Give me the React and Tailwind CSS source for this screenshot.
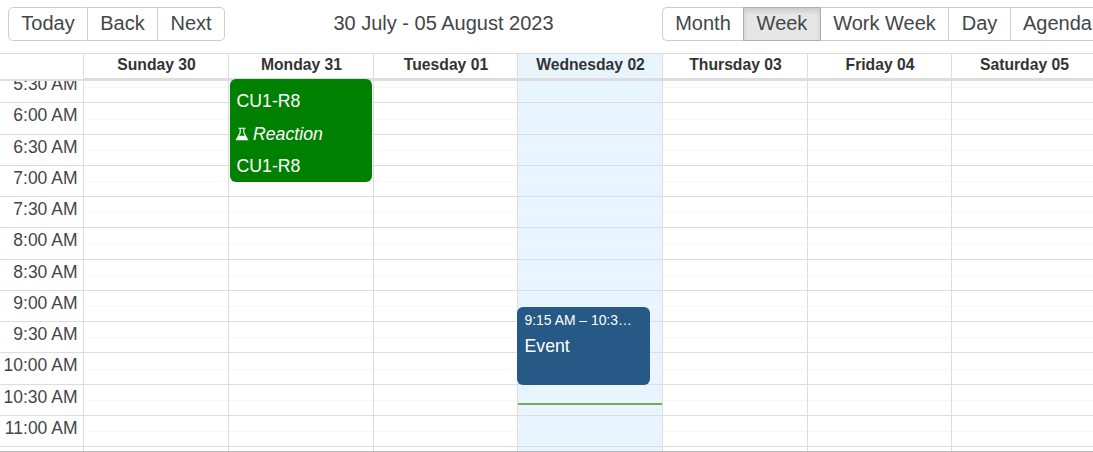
const slots = [
  ['5:30 AM', 'h-[22px]', '-mt-[8px]'],
  ['6:00 AM', 'h-[32px]', 'mt-px'],
  ['6:30 AM', 'h-[31px]', 'mt-px'],
  ['7:00 AM', 'h-[31px]', 'mt-px'],
  ['7:30 AM', 'h-[31px]', 'mt-px'],
  ['8:00 AM', 'h-[32px]', 'mt-px'],
  ['8:30 AM', 'h-[31px]', 'mt-px'],
  ['9:00 AM', 'h-[31px]', 'mt-px'],
  ['9:30 AM', 'h-[31px]', 'mt-px'],
  ['10:00 AM', 'h-[32px]', 'mt-px'],
  ['10:30 AM', 'h-[31px]', 'mt-px'],
  ['11:00 AM', 'h-[31px]', 'mt-px'],
];

const days = [
  ['Sunday 30', 'w-[145px]'],
  ['Monday 31', 'w-[145px]'],
  ['Tuesday 01', 'w-[144px]'],
  ['Wednesday 02', 'w-[145px]'],
  ['Thursday 03', 'w-[145px]'],
  ['Friday 04', 'w-[144px]'],
  ['Saturday 05', 'w-[145px]'],
];

function ToolButton({ label, className, active }) {
  return (
    <button
      className={`h-[34px] shrink-0 border-y border-r pb-[2px] text-center text-[20px] leading-[30px] text-[#434648] ${className} ${
        active ? 'border-[#adadad] bg-[#e6e6e6] shadow-[inset_0_3px_5px_rgba(0,0,0,0.125)]' : 'border-[#ccc] bg-white'
      }`}
    >
      {label}
    </button>
  );
}

function Toolbar() {
  return (
    <div className="flex h-[53px] shrink-0 items-start justify-between pl-2 pt-[7px]">
      <div className="flex">
        <ToolButton label="Today" className="w-[80px] rounded-l-[5px] border-l" />
        <ToolButton label="Back" className="w-[70px]" />
        <ToolButton label="Next" className="w-[67px] rounded-r-[5px]" />
      </div>
      <div className="pt-px text-[20px] leading-[30px] whitespace-nowrap text-[#434648]">
        30 July - 05 August 2023
      </div>
      <div className="flex w-[431px] overflow-hidden">
        <ToolButton label="Month" className="w-[81px] rounded-l-[5px] border-l border-r-0" />
        <ToolButton label="Week" active className="w-[78px] border-l" />
        <ToolButton label="Work Week" className="w-[128px]" />
        <ToolButton label="Day" className="w-[62px]" />
        <ToolButton label="Agenda" className="w-[94px]" />
      </div>
    </div>
  );
}

function Header() {
  return (
    <div className="flex h-[28px] shrink-0 border-t border-b border-[#ddd]">
      <div className="w-[83px] shrink-0 border-b border-[#ddd]" />
      {days.map(([name, width], i) => (
        <div
          key={name}
          className={`shrink-0 border-b-2 border-l border-[#ddd] pl-px text-center text-[15.7px] leading-[22px] font-bold whitespace-nowrap text-[#333] ${width} ${
            i === 3 ? 'bg-[#e8f5fe]' : ''
          }`}
        >
          {name}
        </div>
      ))}
    </div>
  );
}

function Flask() {
  return (
    <svg viewBox="0 0 14 14" className="h-[14px] w-[14px] shrink-0" fill="none" stroke="white">
      <path d="M3.5 1.2h7M5.2 1.2v4.6L1.4 12.6h11.2L8.8 5.8V1.2" strokeWidth="1.1" />
      <path d="M4 8.8h6l2.3 3.8H1.7z" fill="white" stroke="none" />
    </svg>
  );
}

function ReactionEvent() {
  return (
    <div className="absolute -top-[2px] left-px h-[103px] w-[142px] rounded-[6px] bg-[#008000] pt-[6px] pl-[6.5px] text-[17.7px] leading-[32.5px] text-white">
      <div>CU1-R8</div>
      <div className="-ml-[1.5px] flex items-center gap-[4px] italic">
        <Flask />
        <span>Reaction</span>
      </div>
      <div>CU1-R8</div>
    </div>
  );
}

function BlueEvent() {
  return (
    <div className="absolute top-[226px] -left-px h-[78px] w-[133px] rounded-[6px] bg-[#265985] pr-2 pl-[7.5px] pt-[3px] text-white">
      <div className="text-[13.9px] leading-[20px] whitespace-nowrap">9:15 AM – 10:3…</div>
      <div className="pt-[3px] text-[17.7px] leading-[26px]">Event</div>
    </div>
  );
}

function DayColumn({ index, width }) {
  const today = index === 3;
  return (
    <div className={`relative shrink-0 border-l border-[#ddd] ${width} ${today ? 'bg-[#e8f5fe]' : ''}`}>
      {slots.map(([time, height]) => (
        <div key={time} className={`flex flex-col justify-end border-b border-[#ddd] ${height}`}>
          <div className={`h-[15px] border-t ${today ? 'border-[#eef6fb]' : 'border-[#f7f7f7]'}`} />
        </div>
      ))}
      {index === 1 && <ReactionEvent />}
      {today && <BlueEvent />}
      {today && <div className="absolute top-[322px] left-0 h-[2px] w-full bg-[#74ad5a]" />}
    </div>
  );
}

export default function App() {
  return (
    <div
      className="flex h-[452px] w-[1093px] flex-col overflow-hidden bg-white"
      style={{ fontFamily: '"Liberation Sans", Arial, sans-serif' }}
    >
      <Toolbar />
      <Header />
      <div className="flex h-[371px] shrink-0 border-b border-[#bbb]">
        <div className="w-[83px] shrink-0 overflow-hidden">
          {slots.map(([time, height, offset]) => (
            <div key={time} className={`flex flex-col overflow-hidden border-b border-[#ddd] pr-[5.5px] ${height}`}>
              <div className={`text-right text-[17.5px] leading-[22px] whitespace-nowrap text-[#434648] ${offset}`}>
                {time}
              </div>
            </div>
          ))}
        </div>
        {days.map(([name, width], i) => (
          <DayColumn key={name} index={i} width={width} />
        ))}
      </div>
    </div>
  );
}
